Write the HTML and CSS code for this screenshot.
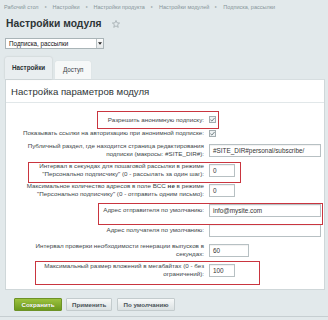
FILE: index.html
```html
<!DOCTYPE html>
<html lang="ru">
<head>
<meta charset="utf-8">
<link rel="stylesheet" href="styles.css">
</head>
<body>
<div class="page">
  <nav class="crumbs">
    <span>Рабочий стол</span><span class="sep">▸</span>
    <span>Настройки</span><span class="sep">▸</span>
    <span>Настройки продукта</span><span class="sep">▸</span>
    <span>Настройки модулей</span><span class="sep">▸</span>
    <span>Подписка, рассылки</span>
  </nav>
  <h1 class="title">Настройки модуля
    <svg class="star" viewBox="0 0 10 10" width="8" height="8"><path d="M5 0.6 L6.3 3.6 L9.5 3.8 L7 5.9 L7.8 9.2 L5 7.4 L2.2 9.2 L3 5.9 L0.5 3.8 L3.7 3.6 Z" fill="none" stroke="#9aa5a8" stroke-width="0.9" stroke-linejoin="round"/></svg>
  </h1>
  <div class="select"><span class="select-text">Подписка, рассылки</span><span class="select-btn"><svg viewBox="0 0 6 4" width="4" height="3"><path d="M0 0 H6 L3 4 Z" fill="#222"/></svg></span></div>
  <div class="tabs">
    <div class="tab tab-active">Настройки</div>
    <div class="tab">Доступ</div>
  </div>
  <div class="panel">
    <div class="panel-head">Настройка параметров модуля</div>
    <div class="panel-body">
      <div class="row row-cb1">
        <div class="label">Разрешить анонимную подписку:</div>
        <div class="field"><span class="cb"><svg viewBox="0 0 8 8" width="7" height="7"><path d="M1.6 4.2 L3.3 5.8 L6.4 2.2" fill="none" stroke="#6f7c80" stroke-width="1.1"/></svg></span></div>
      </div>
      <div class="row row-cb2">
        <div class="label">Показывать ссылки на авторизацию при анонимной подписке:</div>
        <div class="field"><span class="cb"><svg viewBox="0 0 8 8" width="7" height="7"><path d="M1.6 4.2 L3.3 5.8 L6.4 2.2" fill="none" stroke="#6f7c80" stroke-width="1.1"/></svg></span></div>
      </div>
      <div class="row">
        <div class="label">Публичный раздел, где находится страница редактирования<br>подписки (макросы: #SITE_DIR#):</div>
        <div class="field"><span class="input input-wide">#SITE_DIR#personal/subscribe/</span></div>
      </div>
      <div class="row">
        <div class="label">Интервал в секундах для пошаговой рассылки в режиме<br>"Персонально подписчику" (0 - рассылать за один шаг):</div>
        <div class="field"><span class="input input-small">0</span></div>
      </div>
      <div class="row">
        <div class="label">Максимальное количество адресов в поле BCC <b>не</b> в режиме<br>"Персонально подписчику" (0 - отправить одним письмо):</div>
        <div class="field"><span class="input input-small">0</span></div>
      </div>
      <div class="row">
        <div class="label">Адрес отправителя по умолчанию:</div>
        <div class="field"><span class="input input-wide">info@mysite.com</span></div>
      </div>
      <div class="row">
        <div class="label">Адрес получателя по умолчанию:</div>
        <div class="field"><span class="input input-wide"></span></div>
      </div>
      <div class="row">
        <div class="label">Интервал проверки необходимости генерации выпусков в<br>секундах:</div>
        <div class="field"><span class="input input-mid">60</span></div>
      </div>
      <div class="row">
        <div class="label">Максимальный размер вложений в мегабайтах (0 - без<br>ограничений):</div>
        <div class="field"><span class="input input-small">100</span></div>
      </div>
    </div>
  </div>
  <div class="buttons">
    <span class="btn btn-save">Сохранить</span>
    <span class="btn">Применить</span>
    <span class="btn">По умолчанию</span>
  </div>

  <div class="mark mark-1"></div>
  <div class="mark mark-2"></div>
  <div class="mark mark-3"></div>
  <div class="mark mark-4"></div>
</div>
</body>
</html>
```
FILE: styles.css
```css
* { box-sizing: border-box; }
html, body { margin: 0; padding: 0; }
body {
  background: #e2e9eb;
  font-family: "Liberation Sans", Arial, sans-serif;
  color: #333;
  width: 328px;
  height: 320px;
  overflow: hidden;
}
.page { position: relative; width: 328px; height: 320px; }

.crumbs {
  height: 14px;
  line-height: 14px;
  padding-left: 4px;
  font-size: 5.5px;
  color: #86959a;
  white-space: nowrap;
  display: flex;
  align-items: center;
}
.crumbs .sep { margin: 0 6px; font-size: 4px; color: #9aa6aa; }

.title {
  margin: 0;
  height: 20px;
  line-height: 20px;
  padding-left: 6px;
  font-size: 10.3px;
  font-weight: bold;
  color: #2d3436;
  display: flex;
  align-items: center;
}
.title .star { margin-left: 10px; margin-top: -1px; }

.select {
  margin: 4px 0 0 5px;
  width: 99px;
  height: 11px;
  background: #fff;
  border: 1px solid #a9b4b7;
  display: flex;
  align-items: center;
  justify-content: space-between;
  font-size: 6.3px;
  color: #111;
}
.select-text { padding-left: 3px; }
.select-btn {
  width: 7px;
  height: 9px;
  border-left: 1px solid #b9c2c4;
  background: linear-gradient(#fdfdfd, #e4e8e9);
  display: flex;
  align-items: center;
  justify-content: center;
}

.tabs {
  margin: 8px 0 0 5px;
  height: 22px;
  display: flex;
  align-items: flex-end;
  gap: 3px;
}
.tab {
  height: 18px;
  width: 36px;
  background: #f6f8f8;
  font-size: 6.3px;
  color: #3a4245;
  padding-left: 8px;
  line-height: 18px;
  border-radius: 2px 2px 0 0;
  box-shadow: 0 0 1px rgba(0,0,0,0.12);
}
.tab-active {
  height: 22px;
  width: 47px;
  padding-left: 7px;
  line-height: 21px;
  background: #e9eef0;
  font-weight: bold;
  color: #2b3235;
  box-shadow: 0 0 2px rgba(0,0,0,0.18);
}

.panel {
  margin: 0 3px 0 5px;
  background: #fff;
  border: 1px solid #cfd7d9;
  border-top-color: #d7dee0;
}
.panel-head {
  padding: 4px 0 2px 5px;
  line-height: 16px;
  font-size: 9.6px;
  color: #2e3436;
  border-bottom: 1px solid #e1e7e9;
}
.panel-body { padding: 10px 0 9px 0; }

.row {
  display: grid;
  grid-template-columns: 198px 112px;
  column-gap: 5px;
  align-items: center;
  height: 20px;
}
.row-cb1 { height: 13px; }
.row-cb2 { height: 14px; }
.label {
  text-align: right;
  font-size: 6.25px;
  line-height: 8px;
  color: #40474a;
  white-space: nowrap;
}
.label b { font-weight: bold; }
.field { display: flex; align-items: center; }
.cb {
  width: 7px;
  height: 7px;
  border: 1px solid #a3adb0;
  background: #eef2f3;
  display: flex;
  align-items: center;
  justify-content: center;
}
.cb svg { width: 7px; height: 7px; flex: none; }
.input {
  height: 13px;
  background: #fff;
  border: 1px solid #b7c0c3;
  box-shadow: inset 0 1px 1px rgba(0,0,0,0.06);
  font-size: 6.4px;
  line-height: 11px;
  padding-left: 3px;
  color: #333;
}
.input-wide { width: 112px; }
.input-small { width: 26px; }
.input-mid { width: 40px; }

.buttons {
  margin-top: 8px;
  padding: 0 0 5px 14px;
  display: flex;
  gap: 4px;
  border-bottom: 1px solid #c6ced1;
}
.btn {
  height: 13px;
  line-height: 11px;
  border: 1px solid #c3cbcd;
  border-radius: 1px;
  background: linear-gradient(#f7f9f9, #dbe1e2);
  font-size: 6.2px;
  font-weight: bold;
  color: #4a5357;
  padding: 0 5px;
  text-align: center;
}
.btn:nth-child(2) { width: 46px; }
.btn:nth-child(3) { width: 58px; margin-left: 1px; }
.btn-save {
  width: 48px;
  background: linear-gradient(#9cc23e, #6b991e);
  border-color: #6d9226;
  color: #fff;
  text-shadow: 0 0 1px rgba(0,0,0,0.3);
}

.mark {
  position: absolute;
  border: 1.5px solid #c9353f;
}
.mark-1 { left: 97px; top: 111px; width: 122px; height: 18px; }
.mark-2 { left: 28px; top: 162px; width: 213px; height: 21px; }
.mark-3 { left: 98px; top: 203px; width: 225px; height: 22px; }
.mark-4 { left: 35px; top: 261px; width: 225px; height: 24px; }
```
